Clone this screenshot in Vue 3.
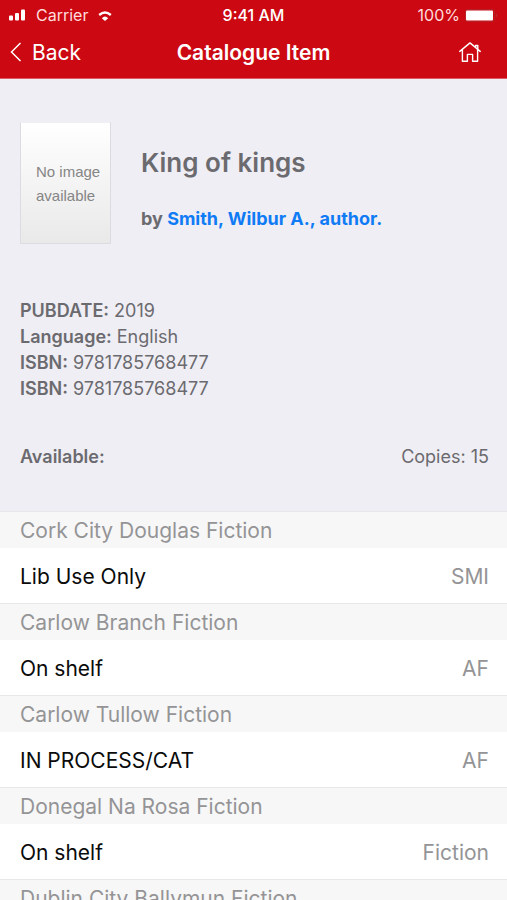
<script setup>
const details = [
  { label: 'PUBDATE:', value: '2019' },
  { label: 'Language:', value: 'English' },
  { label: 'ISBN:', value: '9781785768477' },
  { label: 'ISBN:', value: '9781785768477' },
]

const holdings = [
  { branch: 'Cork City Douglas Fiction', status: 'Lib Use Only', shelf: 'SMI' },
  { branch: 'Carlow Branch Fiction', status: 'On shelf', shelf: 'AF' },
  { branch: 'Carlow Tullow Fiction', status: 'IN PROCESS/CAT', shelf: 'AF' },
  { branch: 'Donegal Na Rosa Fiction', status: 'On shelf', shelf: 'Fiction' },
  { branch: 'Dublin City Ballymun Fiction', status: '', shelf: '' },
]
</script>

<template>
  <div class="screen">
    <header class="top">
      <div class="status">
        <div class="status-left">
          <svg class="signal" width="17" height="12" viewBox="0 0 17 12" aria-hidden="true">
            <rect x="0" y="6.5" width="4" height="5" rx="1" fill="#fff" />
            <rect x="6" y="4" width="4" height="7.5" rx="1" fill="#fff" />
            <rect x="12" y="0.5" width="4" height="11" rx="1" fill="#fff" />
          </svg>
          <span class="carrier">Carrier</span>
          <svg class="wifi" width="14" height="11" viewBox="0 0 14 11" aria-hidden="true">
            <path d="M1.2 5Q7 0.2 12.8 5" fill="none" stroke="#fff" stroke-width="2.4" />
            <path d="M3.8 8.2Q7 5 10.2 8.2L7 11Z" fill="#fff" />
          </svg>
        </div>
        <span class="clock">9:41 AM</span>
        <div class="status-right">
          <span>100%</span>
          <svg class="battery" width="33" height="13" viewBox="0 0 33 13" aria-hidden="true">
            <rect x="0.5" y="0.5" width="29" height="12" rx="2" fill="none" stroke="#b52026" />
            <rect x="1" y="1.5" width="27" height="10" rx="1" fill="#fff" />
            <path d="M31 4.5Q33 6.5 31 8.5Z" fill="#b3343a" />
          </svg>
        </div>
      </div>
      <nav class="nav">
        <button class="back" type="button">
          <svg width="12" height="20" viewBox="0 0 12 20" aria-hidden="true">
            <path d="M10.5 1L1.5 10L10.5 19" fill="none" stroke="#fff" stroke-width="1.5" />
          </svg>
          <span>Back</span>
        </button>
        <h1 class="title">Catalogue Item</h1>
        <button class="home" type="button" aria-label="Home">
          <svg width="22" height="20" viewBox="0 0 22 20" aria-hidden="true">
            <path
              d="M0.8 9.4L11 0.9L21.2 9.4M16.6 5.4V3.5H18.8V7.3M3.4 7.6V19.2H8.4V12.4H13.6V19.2H18.6V7.6"
              fill="none" stroke="#fff" stroke-width="1.4" stroke-linejoin="round" stroke-linecap="round"
            />
          </svg>
        </button>
      </nav>
    </header>

    <main class="content">
      <section class="summary">
        <div class="book">
          <div class="cover">No image<br />available</div>
          <div class="heading">
            <h2 class="book-title">King of kings</h2>
            <p class="author">by <a href="#author">Smith, Wilbur A., author.</a></p>
          </div>
        </div>
        <dl class="details">
          <div v-for="(item, i) in details" :key="i" class="detail">
            <dt>{{ item.label }}</dt>
            <dd>{{ item.value }}</dd>
          </div>
        </dl>
        <div class="availability">
          <strong>Available:</strong>
          <span>Copies: 15</span>
        </div>
      </section>

      <section class="holdings">
        <article v-for="item in holdings" :key="item.branch">
          <h3 class="branch">{{ item.branch }}</h3>
          <div class="holding">
            <span>{{ item.status }}</span>
            <span class="shelf">{{ item.shelf }}</span>
          </div>
        </article>
      </section>
    </main>
  </div>
</template>

<style>
body {
  background: #efeef4;
}
</style>

<style scoped>
.screen {
  display: flex;
  flex-direction: column;
  height: 100vh;
  overflow: hidden;
  font-family: Inter, "Liberation Sans", sans-serif;
  color: #6b6a6f;
}

h1, h2, h3, p, dl, dd {
  margin: 0;
}

button {
  border: 0;
  padding: 0;
  background: none;
  color: inherit;
  font: inherit;
  cursor: pointer;
}

svg {
  display: block;
}

.top {
  flex: none;
  background: #cc0912;
  border-bottom: 1px solid #dc5a62;
  color: #fff;
}

.status,
.nav {
  display: grid;
  grid-template-columns: 1fr auto 1fr;
  align-items: center;
}

.status {
  height: 30px;
  padding: 0 9px;
  font-size: 16px;
}

.status-left,
.status-right {
  display: flex;
  align-items: center;
  color: #ffdcdc;
}

.status-left {
  gap: 10px;
}

.status-right {
  justify-content: flex-end;
  gap: 5px;
}

.clock {
  font-weight: 500;
}

.nav {
  height: 48px;
  padding: 0 26px 4px 10px;
  box-sizing: border-box;
}

.back {
  display: flex;
  align-items: center;
  gap: 10px;
  justify-self: start;
  font-size: 21px;
}

.title {
  padding-left: 16px;
  font-size: 21px;
  font-weight: 600;
}

.home {
  justify-self: end;
}

.content {
  flex: 1;
  min-height: 0;
  overflow-y: auto;
  scrollbar-width: none;
}

.summary {
  padding: 43px 18px 41px 20px;
  background: #efeef4;
  font-size: 18px;
  line-height: 26px;
}

.book {
  display: flex;
  gap: 30px;
}

.cover {
  box-sizing: border-box;
  width: 91px;
  height: 122px;
  padding: 37px 0 0 15px;
  border: 1px solid #dcdce0;
  border-top-color: #f0f0f2;
  background: linear-gradient(#fff, #e9e9e9);
  color: #858585;
  font-family: "Liberation Sans", sans-serif;
  font-size: 15px;
  line-height: 24px;
  white-space: nowrap;
}

.heading {
  padding-top: 25px;
}

.book-title {
  font-size: 26px;
  font-weight: 600;
  line-height: 32px;
}

.author {
  margin-top: 27px;
  font-size: 18px;
  font-weight: 700;
}

.author a {
  color: #0f7bf5;
  text-decoration: none;
}

.details {
  margin-top: 54px;
}

.detail {
  display: flex;
  gap: 5px;
}

.detail dt,
.availability strong {
  font-weight: 600;
}

.availability {
  display: flex;
  justify-content: space-between;
  margin-top: 42px;
}

.holdings {
  background: #fff;
  font-size: 21px;
}

.branch {
  box-sizing: border-box;
  height: 37px;
  padding-left: 20px;
  border-top: 1px solid #e8e8ea;
  background: #f7f7f7;
  color: #949496;
  font-size: 21px;
  font-weight: 400;
  line-height: 38px;
}

.holding {
  box-sizing: border-box;
  display: flex;
  align-items: center;
  justify-content: space-between;
  height: 55px;
  padding: 2px 18px 0 20px;
  line-height: 26px;
  color: #0b0b0b;
}

.shelf {
  color: #949496;
}
</style>
